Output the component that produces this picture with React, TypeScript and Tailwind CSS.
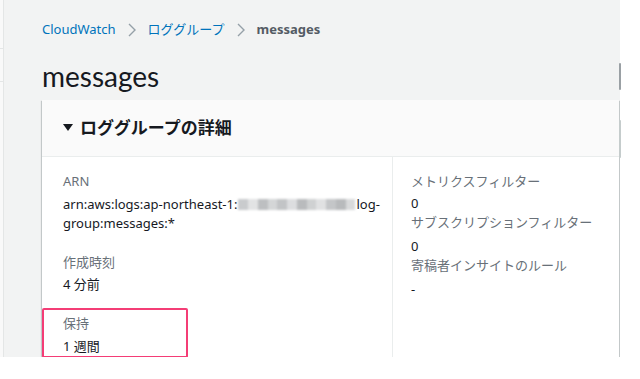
import React from "react";

const F = "font-['Noto_Sans','Noto_Sans_CJK_JP',sans-serif]";

function Chevron() {
  return (
    <svg width="10" height="16" viewBox="0 0 10 16" className="mx-[11px]">
      <polyline points="2,2 8,8 2,14" fill="none" stroke="#95a0a8" strokeWidth="1.4" />
    </svg>
  );
}

function Blur() {
  const cells = ["#c9cbcd", "#e2e3e4", "#bdbfc1", "#d4d6d7", "#c2c4c6", "#dcdddf", "#b9bbbd", "#cfd1d2", "#e0e1e2", "#c4c6c8", "#b8babc", "#d9dadb"];
  return (
    <span className="inline-flex h-[11px] w-[117px] align-[-1px] blur-[1.2px] overflow-hidden mx-[1px]">
      {cells.map((c, i) => (
        <span key={i} className="flex-1 h-full" style={{ background: c }} />
      ))}
    </span>
  );
}

export default function App() {
  return (
    <div className={`w-[640px] h-[379px] bg-white overflow-hidden relative ${F}`}>
      <div className="flex h-[357px]">
        <div className="w-[4px] bg-[#f9f9f9] border-r border-[#e4e6e6] flex flex-col">
          <div className="h-[49px] border-b border-[#e4e6e6]" />
          <div className="h-[33px] border-b border-[#e4e6e6]" />
        </div>
        <div className="w-[616px] bg-[#f2f3f3] pl-[38px] pt-[21px] overflow-hidden">
          <div className="flex items-center h-[18px] text-[13px]">
            <span className="text-[#0073bb]">CloudWatch</span>
            <Chevron />
            <span className="text-[#0073bb]">ロググループ</span>
            <Chevron />
            <span className="text-[#545b64] font-bold">messages</span>
          </div>
          <h1 className="mt-[20px] text-[28px] leading-[34px] text-[#16191f] font-['Lato',sans-serif]">messages</h1>
          <div className="mt-[7px] w-[577px] bg-white shadow-[0_1px_1px_0_rgba(0,28,36,0.3),1px_1px_1px_0_rgba(0,28,36,0.15),-1px_1px_1px_0_rgba(0,28,36,0.15)] h-[300px]">
            <div className="h-[57px] bg-[#fafafa] border-b border-[#eaeded] flex items-center pl-[21px]">
              <svg width="10" height="8" viewBox="0 0 10 8" className="mr-[7px]">
                <polygon points="0,0 10,0 5,7" fill="#16191f" />
              </svg>
              <span className="text-[17px] font-bold text-[#16191f]">ロググループの詳細</span>
            </div>
            <div className="flex pt-[14px]">
              <div className="w-[350px] pl-[21px] pr-[10px] flex flex-col">
                <div className="text-[13px] leading-[20px] text-[#687078]">ARN</div>
                <div className="text-[13px] leading-[19px] text-[#16191f] mt-[4px]">
                  arn:aws:logs:ap-northeast-1:<Blur />log-
                  <br />
                  group:messages:*
                </div>
                <div className="text-[13px] leading-[20px] text-[#687078] mt-[19px]">作成時刻</div>
                <div className="text-[13px] leading-[20px] text-[#16191f] mt-[2px]">4 分前</div>
                <div className="mt-[14px] -ml-[21px] w-[146px] h-[50px] border-2 border-[#f43d76] rounded-[2px] pl-[19px] pt-[3px]">
                  <div className="text-[13px] leading-[20px] text-[#687078]">保持</div>
                  <div className="text-[13px] leading-[20px] text-[#16191f] mt-[3px]">1 週間</div>
                </div>
              </div>
              <div className="border-l border-[#eaeded] pl-[18px] -mt-[14px] pt-[14px] h-[200px]">
                <div className="text-[13px] leading-[20px] text-[#687078]">メトリクスフィルター</div>
                <div className="text-[13px] leading-[20px] text-[#16191f] mt-[2px]">0</div>
                <div className="text-[13px] leading-[20px] text-[#687078] -mt-[1px]">サブスクリプションフィルター</div>
                <div className="text-[13px] leading-[20px] text-[#16191f] mt-[4px]">0</div>
                <div className="text-[13px] leading-[20px] text-[#687078] -mt-[1px]">寄稿者インサイトのルール</div>
                <div className="text-[13px] leading-[20px] text-[#16191f] mt-[4px]">-</div>
              </div>
            </div>
          </div>
        </div>
      </div>
      <div className="absolute left-[619px] top-[63px] w-[2px] h-[27px] bg-[#9aa0a4] rounded-[1px]" />
      <div className="absolute left-[619px] top-[120px] w-[2px] h-[38px] bg-[#c5cccc] rounded-[1px]" />
    </div>
  );
}
